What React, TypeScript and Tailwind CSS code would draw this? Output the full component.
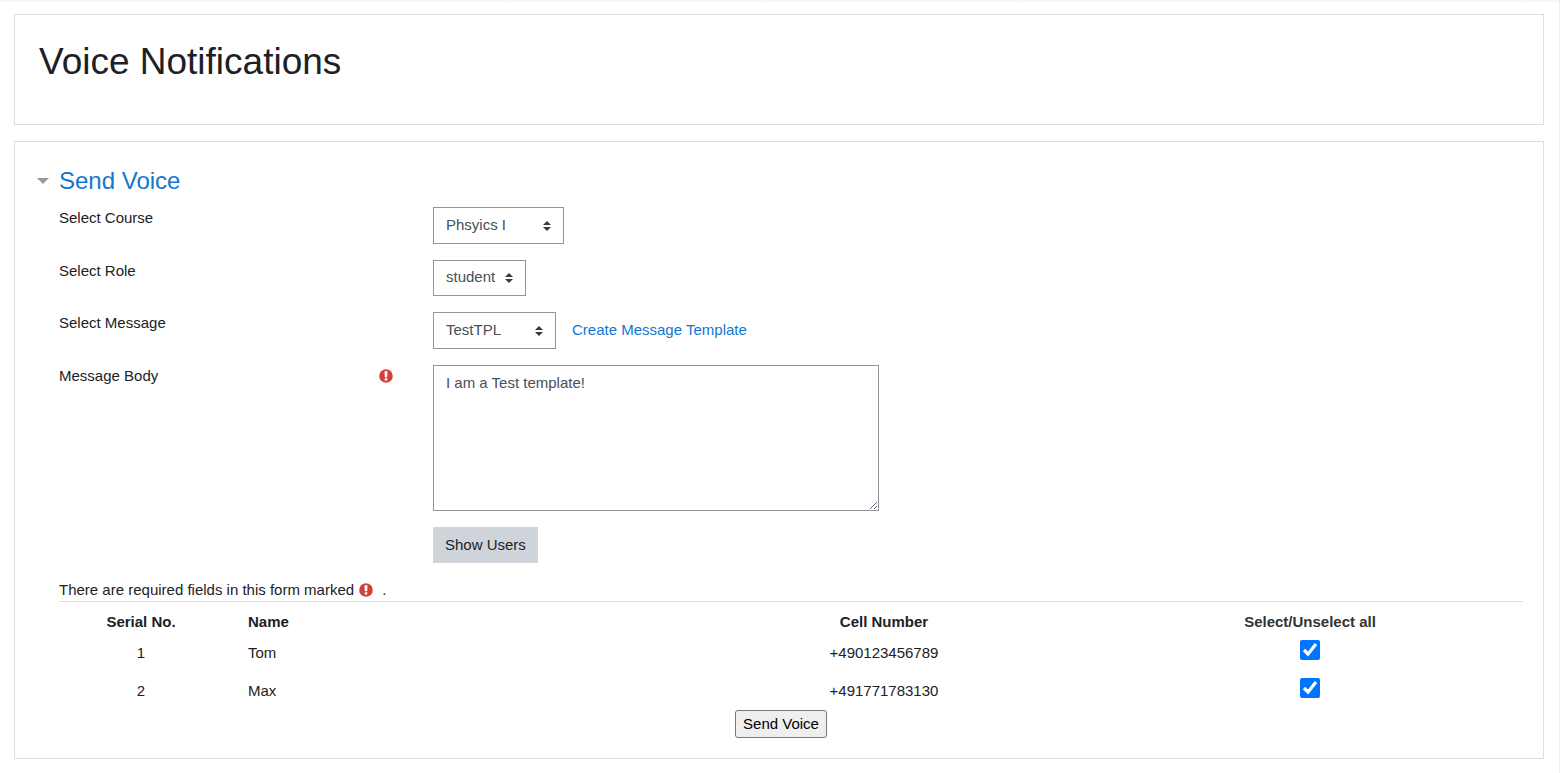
import React, { useState } from 'react';

const initialUsers = [
  { id: 1, name: 'Tom', cell: '+490123456789', checked: true },
  { id: 2, name: 'Max', cell: '+491771783130', checked: true },
];

export default function App() {
  const [users, setUsers] = useState(initialUsers);
  const [message, setMessage] = useState('I am a Test template!');
  const [open, setOpen] = useState(true);

  const toggleUser = (id: number) => {
    setUsers(users.map((u) => (u.id === id ? { ...u, checked: !u.checked } : u)));
  };

  const toggleAll = () => {
    const all = users.every((u) => u.checked);
    setUsers(users.map((u) => ({ ...u, checked: !all })));
  };

  return (
    <div className="min-h-screen border-r border-[#efefef] bg-white font-['Liberation_Sans',Arial,sans-serif] text-[15px] leading-[22px] text-[#1d2125]">
      <div className="h-[3px] bg-gradient-to-b from-[#f3f3f3] to-white"></div>

      <div className="flex flex-col gap-4 pt-[11px] pr-[15px] pb-3.5 pl-3.5">
        {/* Page header */}
        <header className="border border-[#dedede] px-6 pt-6 pb-10">
          <h1 className="text-[37px] leading-[45px]">Voice Notifications</h1>
        </header>

        {/* Form */}
        <main className="border border-[#dedede] pt-6 pr-5 pb-5 pl-[22px]">
          <form onSubmit={(e) => e.preventDefault()}>
            <h2 className="text-2xl leading-[29px] text-[#1177d1]">
              <button type="button" aria-expanded={open} onClick={() => setOpen(!open)} className="flex items-center gap-2.5">
                <svg viewBox="0 0 12 6" className="h-1.5 w-3 fill-[#999]" aria-hidden="true">
                  <path d="M0 0h12L6 6z" />
                </svg>
                Send Voice
              </button>
            </h2>

            <div className="pl-[22px]">
              {open && (
                <div className="mt-3 flex flex-col gap-4">
                  <FormRow id="course" label="Select Course">
                    <SelectBox id="course" size="h-[37px] w-[131px]" options={['Phsyics I']} />
                  </FormRow>
                  <FormRow id="role" label="Select Role">
                    <SelectBox id="role" size="h-9 w-[93px]" options={['student']} />
                  </FormRow>
                  <FormRow id="template" label="Select Message">
                    <SelectBox id="template" size="h-[37px] w-[123px]" options={['TestTPL']} />
                    <a href="#template" className="ml-4 pt-[7px] text-[#1177d1] hover:underline">
                      Create Message Template
                    </a>
                  </FormRow>
                  <FormRow id="message" label="Message Body" required>
                    <textarea
                      id="message"
                      required
                      value={message}
                      onChange={(e) => setMessage(e.target.value)}
                      className="block h-[146px] w-[446px] resize border border-[#8f959e] px-3 py-1.5 text-[#495057]"
                    />
                  </FormRow>
                  <FormRow>
                    <button type="button" className="h-9 bg-[#ced4da] px-3 hover:bg-[#b8c0c8]">
                      Show Users
                    </button>
                  </FormRow>
                </div>
              )}

              <p className="mt-4 flex items-center">
                There are required fields in this form marked
                <RequiredIcon className="mr-[9px] ml-[5px]" />.
              </p>

              <div className="border-t border-[#dedede] pt-2">
                <table className="w-full table-fixed">
                  <colgroup>
                    <col className="w-[164px]" />
                    <col />
                    <col className="w-[29.1%]" />
                    <col className="w-[29.1%]" />
                  </colgroup>
                  <thead>
                    <tr className="h-6">
                      <th>Serial No.</th>
                      <th className="pl-[25px] text-left">Name</th>
                      <th>Cell Number</th>
                      <th>
                        <button type="button" onClick={toggleAll} className="font-bold text-[#333]">
                          Select/Unselect all
                        </button>
                      </th>
                    </tr>
                  </thead>
                  <tbody>
                    {users.map((user) => (
                      <tr key={user.id} className="h-[38px] text-center">
                        <td>{user.id}</td>
                        <td className="pl-[25px] text-left">{user.name}</td>
                        <td>{user.cell}</td>
                        <td className="pt-1.5 align-top">
                          <input
                            type="checkbox"
                            aria-label={user.name}
                            checked={user.checked}
                            onChange={() => toggleUser(user.id)}
                            className="mx-auto block size-5"
                          />
                        </td>
                      </tr>
                    ))}
                  </tbody>
                </table>
              </div>
            </div>

            <div className="flex justify-center pl-0.5">
              <button type="submit" className="h-7 rounded-[3px] border border-[#767676] bg-[#efefef] px-[7px] text-black">
                Send Voice
              </button>
            </div>
          </form>
        </main>
      </div>
    </div>
  );
}

type FormRowProps = {
  id?: string;
  label?: string;
  required?: boolean;
  children: React.ReactNode;
};

const FormRow = ({ id, label, required, children }: FormRowProps) => (
  <div className="flex items-start">
    <div className="flex w-[374px] shrink-0 items-center justify-between pr-10">
      {label && <label htmlFor={id}>{label}</label>}
      {required && <RequiredIcon />}
    </div>
    <div className="flex">{children}</div>
  </div>
);

const SelectBox = ({ id, size, options }: { id: string, size: string, options: string[] }) => (
  <div className={`relative ${size}`}>
    <select id={id} className="block size-full appearance-none border border-[#8f959e] bg-white pr-6 pb-0.5 pl-3 text-[#495057]">
      {options.map((option) => (
        <option key={option}>{option}</option>
      ))}
    </select>
    <svg viewBox="0 0 4 5" className="pointer-events-none absolute inset-y-0 right-[13px] my-auto h-2.5 w-2 fill-[#343a40]" aria-hidden="true">
      <path d="M2 0L0 2h4zm0 5L0 3h4z" />
    </svg>
  </div>
);

const RequiredIcon = ({ className = '' }: { className?: string }) => (
  <svg viewBox="0 0 14 14" className={`size-3.5 ${className}`} role="img" aria-label="Required">
    <circle cx="7" cy="7" r="6.8" fill="#d43f3a" />
    <path d="M5.5 2.3h3L8.2 8.2H5.8zM5.7 9.2h2.6v2.3H5.7z" fill="#fff" />
  </svg>
);
